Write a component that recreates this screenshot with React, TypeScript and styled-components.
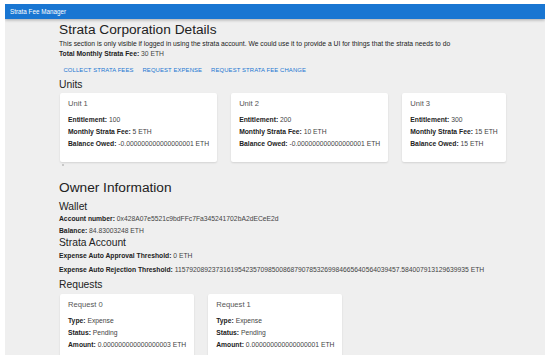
import React from 'react';
import styled, { createGlobalStyle } from 'styled-components';

const GlobalStyle = createGlobalStyle`
  html, body {
    margin: 0;
    padding: 0;
    background: #ffffff;
    font-family: "Liberation Sans", Arial, sans-serif;
  }
`;

const Frame = styled.div`
  margin: 4px 5px 0 5px;
  height: 351px;
  overflow: hidden;
  background: #efefef;
`;

const AppBar = styled.header`
  height: 15px;
  background: #1976d2;
  color: #fff;
  font-size: 6.3px;
  display: flex;
  align-items: center;
  padding-left: 5px;
  box-shadow: 0 1px 3px rgba(0, 0, 0, 0.3);
  position: relative;
`;

const Main = styled.main`
  padding: 2.5px 0 0 54px;
  color: #222;
`;

const Title = styled.h1<{ $top?: number }>`
  margin: ${(p) => p.$top ?? 0}px 0 0 0;
  font-size: 13.7px;
  line-height: 16px;
  font-weight: 400;
`;

const SubTitle = styled.h2<{ $top?: number }>`
  margin: ${(p) => p.$top ?? 0}px 0 0 0;
  font-size: 10.3px;
  line-height: 12px;
  font-weight: 400;
`;

const Text = styled.p<{ $h?: number; $top?: number }>`
  margin: ${(p) => p.$top ?? 0}px 0 0 0;
  font-size: 6.75px;
  line-height: ${(p) => p.$h ?? 12}px;
  color: #222;

  b {
    font-weight: 700;
    color: #222;
  }
`;

const Value = styled.span`
  color: #444;
`;

const ButtonRow = styled.div`
  display: flex;
  margin: 4px 0 1px 0;
`;

const TextButton = styled.button`
  border: none;
  background: transparent;
  color: #1976d2;
  font-family: inherit;
  font-size: 5.9px;
  letter-spacing: 0.02em;
  text-transform: uppercase;
  padding: 0 4.5px;
  height: 16px;
  cursor: pointer;
`;

const CardRow = styled.div<{ $top?: number }>`
  display: flex;
  align-items: stretch;
  gap: 14px;
  margin-top: ${(p) => p.$top ?? 2}px;
  padding-left: 1px;
`;

const Card = styled.div`
  background: #fff;
  border-radius: 2px;
  box-shadow: 0 1px 2px rgba(0, 0, 0, 0.12);
  padding: 5px 8px 12px 8px;
`;

const CardTitle = styled.div`
  font-size: 7.6px;
  line-height: 12px;
  color: #555;
  margin-bottom: 4px;
`;

const ScrollDot = styled.div`
  width: 2px;
  height: 2px;
  margin: 2px 0 0 3px;
  background: #bbb;
  border-radius: 50%;
`;

const Field: React.FC<{ label: string; value: string; h?: number }> = ({ label, value, h }) => (
  <Text $h={h}>
    <b>{label}:</b> <Value>{value}</Value>
  </Text>
);

const units = [
  { name: 'Unit 1', entitlement: '100', fee: '5 ETH', owed: '-0.000000000000000001 ETH' },
  { name: 'Unit 2', entitlement: '200', fee: '10 ETH', owed: '-0.000000000000000001 ETH' },
  { name: 'Unit 3', entitlement: '300', fee: '15 ETH', owed: '15 ETH' },
];

const requests = [
  { name: 'Request 0', type: 'Expense', status: 'Pending', amount: '0.000000000000000003 ETH' },
  { name: 'Request 1', type: 'Expense', status: 'Pending', amount: '0.000000000000000001 ETH' },
];

const App: React.FC = () => {
  return (
    <>
      <GlobalStyle />
      <Frame>
        <AppBar>Strata Fee Manager</AppBar>
        <Main>
          <Title>Strata Corporation Details</Title>
          <Text $h={9.3} $top={1.8}>
            This section is only visible if logged in using the strata account. We could use it to provide a UI for
            things that the strata needs to do
          </Text>
          <Field label="Total Monthly Strata Fee" value="30 ETH" h={9.3} />
          <ButtonRow>
            <TextButton>Collect Strata Fees</TextButton>
            <TextButton>Request Expense</TextButton>
            <TextButton>Request Strata Fee Change</TextButton>
          </ButtonRow>
          <SubTitle>Units</SubTitle>
          <CardRow>
            {units.map((u) => (
              <Card key={u.name}>
                <CardTitle>{u.name}</CardTitle>
                <Field label="Entitlement" value={u.entitlement} />
                <Field label="Monthly Strata Fee" value={u.fee} />
                <Field label="Balance Owed" value={u.owed} />
              </Card>
            ))}
          </CardRow>
          <ScrollDot />

          <Title $top={14}>Owner Information</Title>
          <SubTitle $top={5}>Wallet</SubTitle>
          <Field label="Account number" value="0x428A07e5521c9bdFFc7Fa345241702bA2dECeE2d" />
          <Field label="Balance" value="84.83003248 ETH" />
          <SubTitle>Strata Account</SubTitle>
          <Field label="Expense Auto Approval Threshold" value="0 ETH" h={14} />
          <Field
            label="Expense Auto Rejection Threshold"
            value="115792089237316195423570985008687907853269984665640564039457.584007913129639935 ETH"
            h={13}
          />
          <SubTitle $top={3}>Requests</SubTitle>
          <CardRow $top={3}>
            {requests.map((r) => (
              <Card key={r.name}>
                <CardTitle>{r.name}</CardTitle>
                <Field label="Type" value={r.type} />
                <Field label="Status" value={r.status} />
                <Field label="Amount" value={r.amount} />
              </Card>
            ))}
          </CardRow>
        </Main>
      </Frame>
    </>
  );
};

export default App;
